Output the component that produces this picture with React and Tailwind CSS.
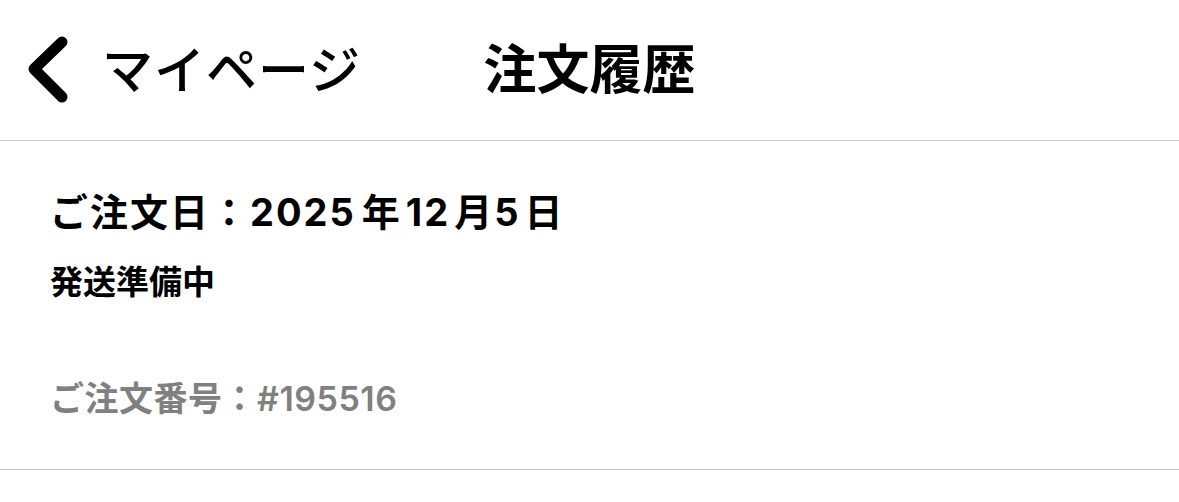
/** Order history screen: header with back link and one order row. */

export default function App() {
  const font = { fontFamily: 'Inter, "Noto Sans CJK JP", "Noto Sans", sans-serif' };

  return (
    <div className="w-[1179px] h-[502px] bg-white text-black" style={font}>
      <header className="relative flex h-[141px] items-center border-b border-[#c8c8c8]">
        <button type="button" className="flex items-center pl-[24px]">
          <svg width="48" height="70" viewBox="0 0 48 70" fill="none">
            <path
              d="M38 7 L10 34 L38 62"
              stroke="black"
              strokeWidth="11"
              strokeLinecap="round"
              strokeLinejoin="round"
            />
          </svg>
          <span className="ml-[30px] text-[51px] font-medium leading-none tracking-[1px]">マイページ</span>
        </button>
        <h1 className="absolute left-1/2 -translate-x-1/2 text-[53px] font-bold leading-none">注文履歴</h1>
      </header>

      <section className="border-b border-[#c8c8c8] px-[50px] pt-[52px] h-[329px]">
        <p className="text-[38px] font-bold leading-none tracking-[2px]">
          ご注文日：2025<span className="ml-[6px]">年</span>
          <span className="ml-[4px]">12</span>
          <span className="ml-[4px]">月</span>5<span className="ml-[4px]">日</span>
        </p>
        <p className="mt-[35px] text-[33px] font-bold leading-none">発送準備中</p>
        <p className="mt-[83px] text-[34px] font-semibold leading-none text-[#808080] tracking-[0.5px]">
          ご注文番号：#195516
        </p>
      </section>
    </div>
  );
}
